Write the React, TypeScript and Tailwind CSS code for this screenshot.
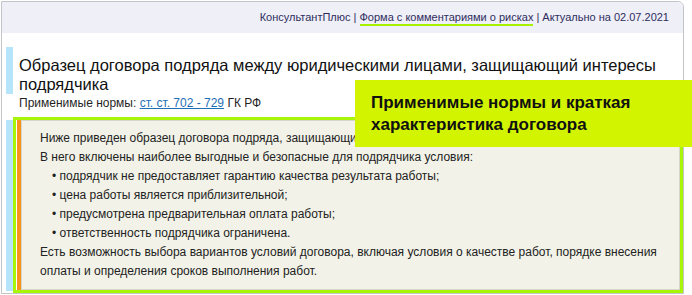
import React from 'react';

const bullets = [
  'подрядчик не предоставляет гарантию качества результата работы;',
  'цена работы является приблизительной;',
  'предусмотрена предварительная оплата работы;',
  'ответственность подрядчика ограничена.',
];

export default function App() {
  return (
    <div className="relative w-[692px] h-[295px] bg-white overflow-hidden font-['Liberation_Sans',Arial,sans-serif] text-[#1f1f1f]">
      {/* Document window */}
      <div className="ml-px mt-px w-[683px] h-[293px] border border-[#c4c4c8] rounded-tr-[6px]">
        {/* Header bar */}
        <div className="h-[31px] bg-[#efeff8] rounded-tr-[5px] flex items-center justify-end pr-[14px] text-[11px] text-[#2d2d5c] whitespace-nowrap">
          <span>КонсультантПлюс&nbsp;|&nbsp;</span>
          <span className="relative">
            Форма с комментариями о рисках
            <span className="absolute left-0 right-0 top-[15px] h-[2px] bg-[#a6f000]" />
          </span>
          <span>&nbsp;|&nbsp;Актуально на 02.07.2021</span>
        </div>

        {/* Title */}
        <div className="pl-[4px] pt-[14px]">
          <div className="border-l-[7px] border-[#b5e4fb] pl-[6px] pt-[9px] text-[16.5px] leading-[19px] text-[#111]">
            Образец договора подряда между юридическими лицами, защищающий интересы подрядчика
          </div>
          <p className="pl-[13px] mt-[2px] text-[12px] leading-[15px]">
            Применимые нормы:{' '}
            <a className="text-[#1f6fb8] underline">ст. ст. 702 - 729</a> ГК РФ
          </p>
        </div>

        {/* Summary block */}
        <div className="flex ml-[4px] mt-[6px]">
          <div className="w-[7px] h-[171px] mt-[3px] bg-[#b5e4fb]" />
          <div className="w-[673px] h-[176px] border-[3px] border-[#a8f50a] pl-px flex">
            <div className="w-[4px] bg-[#f7931e]" />
            <div className="flex-1 bg-[#f2f2e8] border border-[#d6d6cc] pl-[18px] pt-[8px] text-[12px] leading-[19px] text-[#222]">
              <p>Ниже приведен образец договора подряда, защищающий интересы подрядчика.</p>
              <p>В него включены наиболее выгодные и безопасные для подрядчика условия:</p>
              <ul className="pl-[12px]">
                {bullets.map((b) => (
                  <li key={b}>• {b}</li>
                ))}
              </ul>
              <p>
                Есть возможность выбора вариантов условий договора, включая условия о качестве работ, порядке внесения
                оплаты и определения сроков выполнения работ.
              </p>
            </div>
          </div>
        </div>
      </div>

      {/* Callout annotation */}
      <div className="absolute left-[355px] top-[80px] w-[337px] h-[67px] bg-[#d3f400] pl-[16px] pt-[12px] text-[17px] leading-[22px] font-bold text-[#111]">
        Применимые нормы и краткая
        <br />
        характеристика договора
      </div>
    </div>
  );
}
